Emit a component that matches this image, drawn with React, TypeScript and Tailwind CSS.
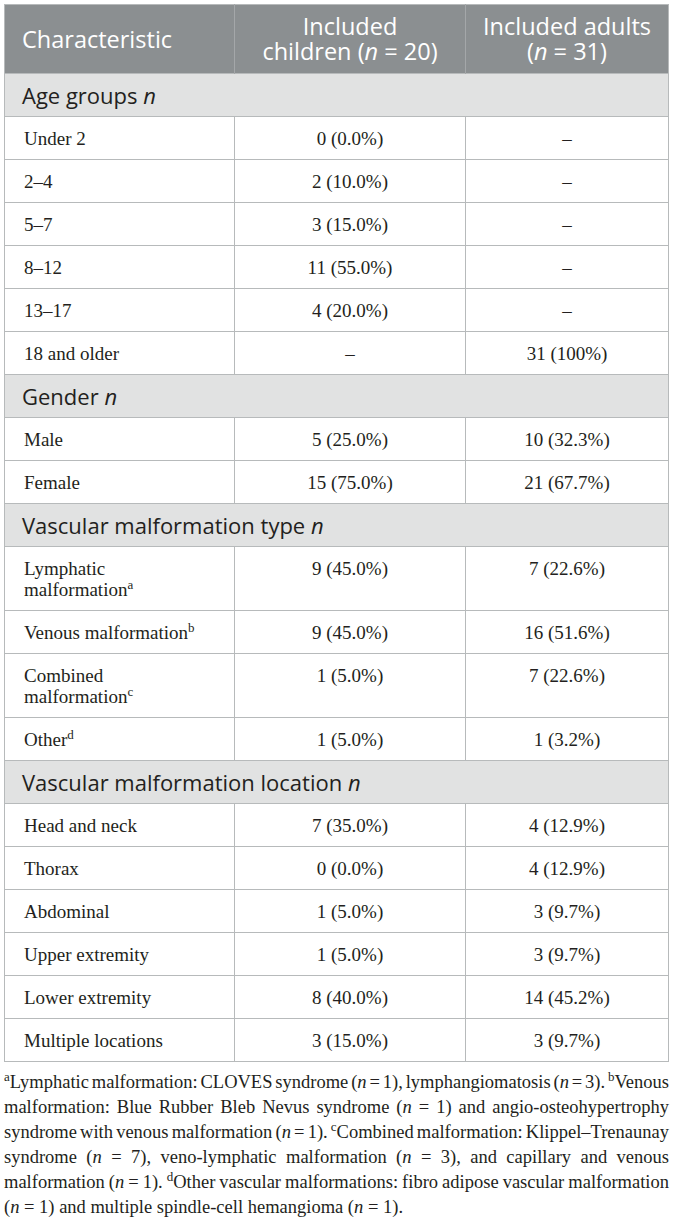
import React from "react";

type DataRow = {
  kind: "data";
  label: React.ReactNode;
  c1: string;
  c2: string;
};
type SectionRow = { kind: "section"; label: string };
type Row = DataRow | SectionRow;

const Sup = ({ children }: { children: React.ReactNode }) => (
  <sup className="text-[13px] relative top-[-7px] align-baseline">{children}</sup>
);

const rows: Row[] = [
  { kind: "section", label: "Age groups" },
  { kind: "data", label: "Under 2", c1: "0 (0.0%)", c2: "–" },
  { kind: "data", label: "2–4", c1: "2 (10.0%)", c2: "–" },
  { kind: "data", label: "5–7", c1: "3 (15.0%)", c2: "–" },
  { kind: "data", label: "8–12", c1: "11 (55.0%)", c2: "–" },
  { kind: "data", label: "13–17", c1: "4 (20.0%)", c2: "–" },
  { kind: "data", label: "18 and older", c1: "–", c2: "31 (100%)" },
  { kind: "section", label: "Gender" },
  { kind: "data", label: "Male", c1: "5 (25.0%)", c2: "10 (32.3%)" },
  { kind: "data", label: "Female", c1: "15 (75.0%)", c2: "21 (67.7%)" },
  { kind: "section", label: "Vascular malformation type" },
  {
    kind: "data",
    label: (
      <>
        Lymphatic
        <br />
        malformation<Sup>a</Sup>
      </>
    ),
    c1: "9 (45.0%)",
    c2: "7 (22.6%)",
  },
  {
    kind: "data",
    label: (
      <>
        Venous malformation<Sup>b</Sup>
      </>
    ),
    c1: "9 (45.0%)",
    c2: "16 (51.6%)",
  },
  {
    kind: "data",
    label: (
      <>
        Combined
        <br />
        malformation<Sup>c</Sup>
      </>
    ),
    c1: "1 (5.0%)",
    c2: "7 (22.6%)",
  },
  {
    kind: "data",
    label: (
      <>
        Other<Sup>d</Sup>
      </>
    ),
    c1: "1 (5.0%)",
    c2: "1 (3.2%)",
  },
  { kind: "section", label: "Vascular malformation location" },
  { kind: "data", label: "Head and neck", c1: "7 (35.0%)", c2: "4 (12.9%)" },
  { kind: "data", label: "Thorax", c1: "0 (0.0%)", c2: "4 (12.9%)" },
  { kind: "data", label: "Abdominal", c1: "1 (5.0%)", c2: "3 (9.7%)" },
  { kind: "data", label: "Upper extremity", c1: "1 (5.0%)", c2: "3 (9.7%)" },
  { kind: "data", label: "Lower extremity", c1: "8 (40.0%)", c2: "14 (45.2%)" },
  { kind: "data", label: "Multiple locations", c1: "3 (15.0%)", c2: "3 (9.7%)" },
];

const N = () => <i>n</i>;
const FSup = ({ children }: { children: React.ReactNode }) => (
  <sup className="text-[13px] relative top-[-7px] align-baseline">{children}</sup>
);

export default function App() {
  return (
    <div className="w-[673px] bg-white px-[4px] pt-[4px] pb-[10px] text-[#231f20]">
      <table className="w-[665px] table-fixed border-collapse border border-[#b7babb]">
        <colgroup>
          <col className="w-[230px]" />
          <col className="w-[231px]" />
          <col />
        </colgroup>
        <thead>
          <tr className="bg-[#8b8f91] text-white font-['Open_Sans',sans-serif] text-[23.5px] leading-[25px]">
            <th className="text-left font-normal align-middle pl-[17px] pt-[9px] pb-[9px] border-r border-[#a4a7a9]">
              Characteristic
            </th>
            <th className="text-center font-normal align-middle pt-[9px] pb-[9px] border-r border-[#a4a7a9]">
              Included
              <br />
              children (<i>n</i> = 20)
            </th>
            <th className="text-center font-normal align-middle pt-[9px] pb-[9px]">
              Included adults
              <br />(<i>n</i> = 31)
            </th>
          </tr>
        </thead>
        <tbody>
          {rows.map((r, i) =>
            r.kind === "section" ? (
              <tr key={i} className="bg-[#e1e2e2]">
                <td
                  colSpan={3}
                  className="pl-[17px] pt-[11px] pb-[10px] leading-[21px] text-[22px] font-['Open_Sans',sans-serif] text-[#231f20] border border-[#b7babb]"
                >
                  {r.label} <i>n</i>
                </td>
              </tr>
            ) : (
              <tr key={i} className="font-['Liberation_Serif',serif] text-[19px] leading-[21px] text-[#231f20]">
                <td className="align-top pl-[19px] pt-[11px] pb-[10px] border border-[#b7babb]">
                  {r.label}
                </td>
                <td className="align-top text-center pt-[11px] pb-[10px] border border-[#b7babb]">
                  {r.c1}
                </td>
                <td className="align-top text-center pt-[11px] pb-[10px] border border-[#b7babb]">
                  {r.c2}
                </td>
              </tr>
            )
          )}
        </tbody>
      </table>

      <div className="mt-[8px] w-[665px] font-['Liberation_Serif',serif] text-[18.5px] leading-[25px] text-[#231f20]">
        <div className="whitespace-nowrap text-justify [text-align-last:justify] [word-spacing:-3px]">
          <FSup>a</FSup>Lymphatic malformation: CLOVES syndrome (<N /> = 1), lymphangiomatosis (<N /> = 3).{" "}
          <FSup>b</FSup>Venous
        </div>
        <div className="text-justify [text-align-last:justify]">
          malformation: Blue Rubber Bleb Nevus syndrome (<N /> = 1) and angio-osteohypertrophy
        </div>
        <div className="whitespace-nowrap text-justify [text-align-last:justify] [word-spacing:-3px]">
          syndrome with venous malformation (<N /> = 1). <FSup>c</FSup>Combined malformation: Klippel–Trenaunay
        </div>
        <div className="text-justify [text-align-last:justify]">
          syndrome (<N /> = 7), veno-lymphatic malformation (<N /> = 3), and capillary and venous
        </div>
        <div className="whitespace-nowrap text-justify [text-align-last:justify] [word-spacing:-1px]">
          malformation (<N /> = 1). <FSup>d</FSup>Other vascular malformations: fibro adipose vascular malformation
        </div>
        <div className="text-left">
          (<N /> = 1) and multiple spindle-cell hemangioma (<N /> = 1).
        </div>
      </div>
    </div>
  );
}
